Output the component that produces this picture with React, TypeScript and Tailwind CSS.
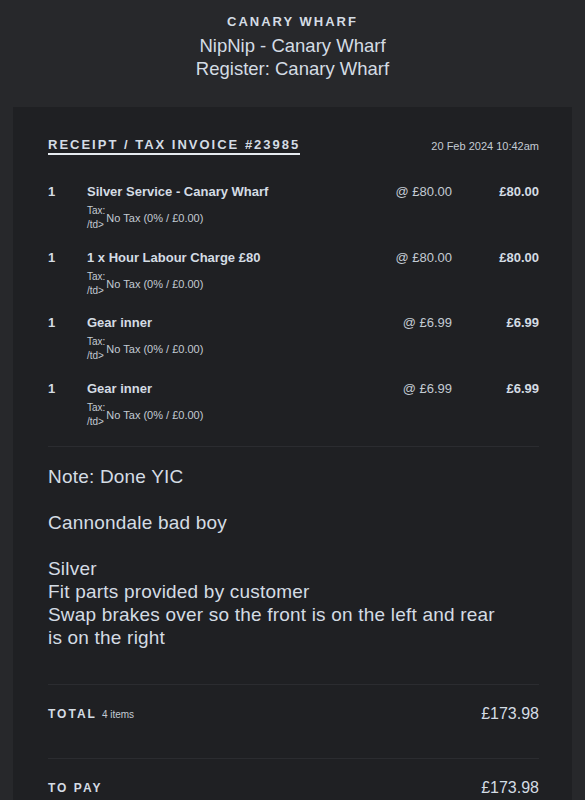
import React from 'react';

interface LineItem {
  qty: number;
  name: string;
  unit: string;
  total: string;
}

const items: LineItem[] = [
  { qty: 1, name: 'Silver Service - Canary Wharf', unit: '@ £80.00', total: '£80.00' },
  { qty: 1, name: '1 x Hour Labour Charge £80', unit: '@ £80.00', total: '£80.00' },
  { qty: 1, name: 'Gear inner', unit: '@ £6.99', total: '£6.99' },
  { qty: 1, name: 'Gear inner', unit: '@ £6.99', total: '£6.99' },
];

const ItemRow: React.FC<{ item: LineItem }> = ({ item }) => {
  return (
    <div className="flex">
      <div className="w-[39px] text-[13px] leading-4 font-bold">{item.qty}</div>
      <div className="flex-1">
        <div className="text-[13px] leading-4 font-bold">{item.name}</div>
        <div className="mt-1 flex items-center">
          <div className="text-[10px] leading-[14px] text-[#c3cbd3]">
            Tax:
            <br />
            /td&gt;
          </div>
          <div className="ml-[1px] text-[11px] leading-4 text-[#c3cbd3]">No Tax (0% / £0.00)</div>
        </div>
      </div>
      <div className="w-[120px] text-right text-[13px] leading-4 text-[#c3cbd3]">{item.unit}</div>
      <div className="w-[87px] text-right text-[13px] leading-4 font-bold">{item.total}</div>
    </div>
  );
};

export default function App() {
  return (
    <div
      className="min-h-[800px] bg-[#27282b] text-[#d4dce4]"
      style={{ fontFamily: '"Liberation Sans", Arial, sans-serif' }}
    >
      {/* Store header */}
      <div className="pt-[14px] text-center">
        <div className="text-[13px] leading-4 font-bold tracking-[2px]">CANARY WHARF</div>
        <div className="mt-1 text-[18.5px] leading-[23px]">NipNip - Canary Wharf</div>
        <div className="text-[18.5px] leading-[23px]">Register: Canary Wharf</div>
      </div>

      {/* Receipt panel */}
      <div className="mx-[13px] mt-[27px] bg-[#1f2023] pl-[35px] pr-[33px] pt-[30px] pb-10">
        <div className="flex items-start justify-between">
          <div className="border-b-2 border-[#e6ebf0] text-[13px] leading-4 font-bold tracking-[2px]">
            RECEIPT / TAX INVOICE #23985
          </div>
          <div className="pt-[1px] text-[11px] leading-4 text-[#c3cbd3]">20 Feb 2024 10:42am</div>
        </div>

        <div className="mt-[29px] flex flex-col gap-[17.5px]">
          {items.map((item, i) => (
            <ItemRow key={i} item={item} />
          ))}
        </div>

        <div className="mt-[17px] border-t border-[#2b2c30]" />

        <div className="pt-[18px] text-[19px] leading-[23px] tracking-[0.2px]">
          Note: Done YIC
          <br />
          <br />
          Cannondale bad boy
          <br />
          <br />
          Silver
          <br />
          Fit parts provided by customer
          <br />
          Swap brakes over so the front is on the left and rear
          <br />
          is on the right
        </div>

        <div className="mt-[35px] border-t border-[#2b2c30]" />
        <div className="flex items-center justify-between pt-[19px] pb-[33px] leading-5">
          <div className="flex items-baseline gap-[5px]">
            <span className="text-[12px] font-bold tracking-[2px]">TOTAL</span>
            <span className="text-[10px] text-[#c3cbd3]">4 items</span>
          </div>
          <div className="text-[16px]">£173.98</div>
        </div>

        <div className="border-t border-[#2b2c30]" />
        <div className="flex items-center justify-between pt-[19px] pb-[33px] leading-5">
          <span className="text-[12px] font-bold tracking-[2px]">TO PAY</span>
          <div className="text-[16px]">£173.98</div>
        </div>
      </div>
    </div>
  );
}
